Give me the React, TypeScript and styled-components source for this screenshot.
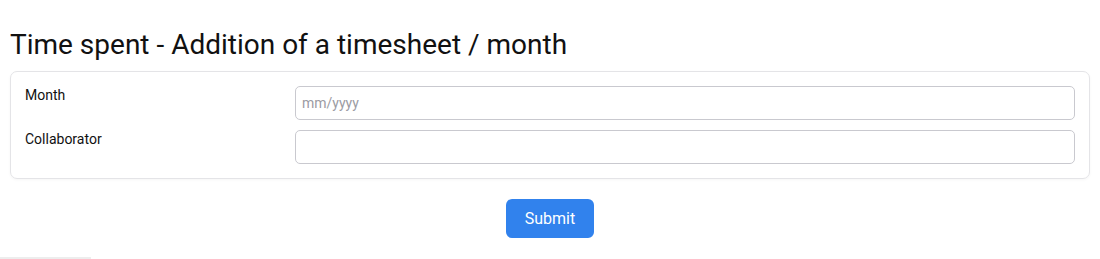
import React, { ReactElement } from 'react';
import styled, { createGlobalStyle } from 'styled-components';

const GlobalStyle = createGlobalStyle`
  html, body {
    margin: 0;
    padding: 0;
    background: #ffffff;
  }
  body {
    font-family: Roboto, 'Liberation Sans', sans-serif;
    color: #111111;
  }
`;

const Page = styled.div`
  padding: 0 10px 0 10px;
  height: 259px;
  position: relative;
  box-sizing: border-box;
`;

const Title = styled.h1`
  margin: 0;
  padding-top: 27px;
  font-size: 28px;
  font-weight: 400;
  line-height: 35px;
  color: #111111;
`;

const Card = styled.div`
  margin-top: 9px;
  border: 1px solid #e4e4e7;
  border-radius: 7px;
  box-shadow: 0 1px 3px rgba(0, 0, 0, 0.04);
  padding: 14px 14px 14px 14px;
  display: flex;
  flex-direction: column;
  gap: 10px;
`;

const Row = styled.div`
  display: grid;
  grid-template-columns: 270px 1fr;
  align-items: start;
`;

const Label = styled.label`
  font-size: 14px;
  line-height: 17px;
  padding-top: 1px;
  color: #111111;
`;

const Input = styled.input`
  box-sizing: border-box;
  width: 100%;
  height: 34px;
  border: 1px solid #c9c9cf;
  border-radius: 5px;
  padding: 0 6px;
  font-family: Roboto, 'Liberation Sans', sans-serif;
  font-size: 14px;
  color: #111111;
  outline: none;

  &::placeholder {
    color: #9b9ba3;
  }
`;

const Actions = styled.div`
  display: flex;
  justify-content: center;
  margin-top: 20px;
`;

const SubmitButton = styled.button`
  width: 88px;
  height: 39px;
  border: none;
  border-radius: 6px;
  background: #3182ed;
  color: #ffffff;
  font-family: Roboto, 'Liberation Sans', sans-serif;
  font-size: 16px;
  cursor: pointer;
`;

const Scrollbar = styled.div`
  position: absolute;
  left: 0;
  bottom: 0;
  width: 91px;
  height: 2px;
  background: #ededed;
`;

const App = (): ReactElement => {
  return (
    <>
      <GlobalStyle />
      <Page>
        <Title>Time spent - Addition of a timesheet / month</Title>
        <Card>
          <Row>
            <Label>Month</Label>
            <Input placeholder="mm/yyyy" />
          </Row>
          <Row>
            <Label>Collaborator</Label>
            <Input />
          </Row>
        </Card>
        <Actions>
          <SubmitButton type="button">Submit</SubmitButton>
        </Actions>
        <Scrollbar />
      </Page>
    </>
  );
};

export default App;
